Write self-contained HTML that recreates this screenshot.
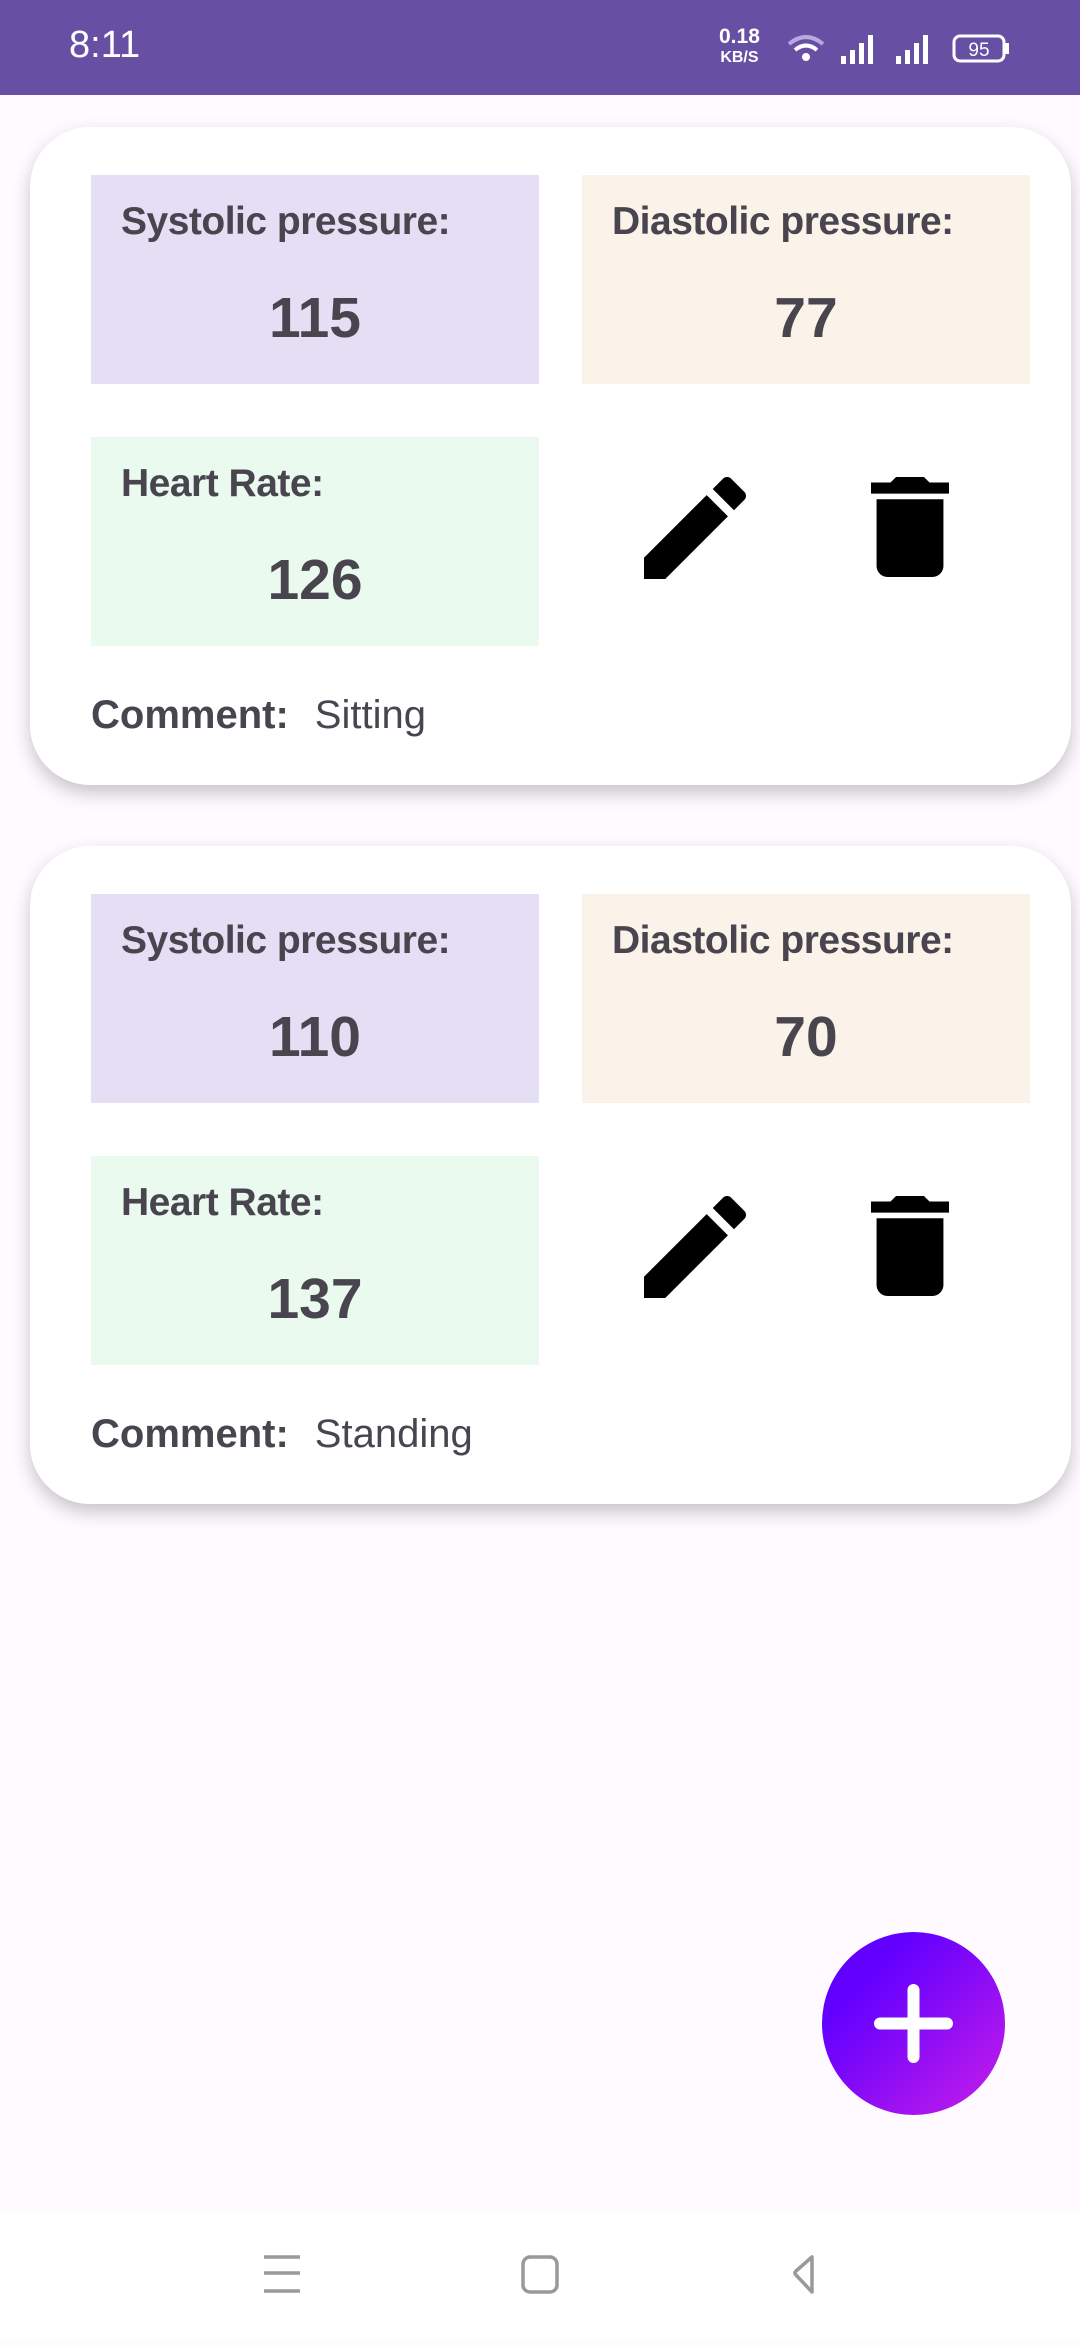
<!DOCTYPE html>
<html><head><meta charset="utf-8"><style>
*{margin:0;padding:0;box-sizing:border-box}
body{width:1080px;height:2340px;background:#fefaff;font-family:"Liberation Sans",sans-serif;position:relative;overflow:hidden;color:#49454f}
.sb{position:absolute;left:0;top:0;width:1080px;height:95px;background:#6750a4;color:#fff}
.card{position:absolute;left:30px;width:1041px;height:658px;background:#fff;border-radius:60px;box-shadow:0 8px 18px rgba(0,0,0,0.22)}
.box{position:absolute;width:448px;height:209px}
.lab{position:absolute;left:30px;top:25px;font-size:39px;font-weight:bold;letter-spacing:-0.5px}
.val{position:absolute;left:0;width:100%;text-align:center;top:110px;font-size:57px;font-weight:bold}
.com{position:absolute;left:61px;top:566px;font-size:40px}
.com b{margin-right:26px}
.nav{position:absolute;left:0;top:2212px;width:1080px;height:128px;background:#fff}
</style></head><body>
<div class="sb">
<div style="position:absolute;left:69px;top:24px;font-size:38px">8:11</div>
<div style="position:absolute;left:719px;top:27px;font-size:21px;font-weight:bold;line-height:19px;text-align:center">0.18<br><span style="font-size:16px">KB/S</span></div>
<svg style="position:absolute;left:786px;top:30px" width="230" height="40" viewBox="0 0 230 40">
<path d="M3 14 Q20 0 37 14" stroke="#b9a9e0" stroke-width="4" fill="none"/>
<path d="M9 20 Q20 11 31 20" stroke="#fff" stroke-width="4" fill="none"/>
<circle cx="20" cy="27" r="4" fill="#fff"/>
<rect x="55" y="26" width="5" height="8" fill="#fff"/><rect x="64" y="20" width="5" height="14" fill="#fff"/><rect x="73" y="13" width="5" height="21" fill="#fff"/><rect x="82" y="5" width="5" height="29" fill="#fff"/>
<rect x="110" y="26" width="5" height="8" fill="#fff"/><rect x="119" y="20" width="5" height="14" fill="#fff"/><rect x="128" y="13" width="5" height="21" fill="#fff"/><rect x="137" y="5" width="5" height="29" fill="#fff"/>
<rect x="168" y="6" width="50" height="25" rx="6" stroke="#fff" stroke-width="3" fill="none"/><rect x="219" y="13" width="4" height="11" fill="#fff"/>
<text x="193" y="26" font-size="19" fill="#fff" text-anchor="middle" font-family="Liberation Sans">95</text>
</svg>
</div>

<div class="card" style="top:127px">
<div class="box" style="left:61px;top:48px;background:#e4dff5"><div class="lab">Systolic pressure:</div><div class="val">115</div></div>
<div class="box" style="left:552px;top:48px;background:#fbf2ea"><div class="lab">Diastolic pressure:</div><div class="val">77</div></div>
<div class="box" style="left:61px;top:310px;background:#eafaee"><div class="lab">Heart Rate:</div><div class="val">126</div></div>
<svg style="position:absolute;left:597px;top:333px" width="136" height="136" viewBox="0 0 24 24"><path d="M3 17.25V21h3.75L17.81 9.94l-3.75-3.75L3 17.25zM20.71 7.04a1 1 0 0 0 0-1.41l-2.34-2.34a1 1 0 0 0-1.41 0l-1.83 1.83 3.75 3.75 1.83-1.83z"/></svg>
<svg style="position:absolute;left:841px;top:350px" width="78" height="100" viewBox="5 3 14 18" preserveAspectRatio="none"><path d="M6 19c0 1.1.9 2 2 2h8c1.1 0 2-.9 2-2V7H6v12zM19 4h-3.5l-1-1h-5l-1 1H5v2h14V4z"/></svg>
<div class="com"><b>Comment:</b>Sitting</div>
</div>

<div class="card" style="top:846px">
<div class="box" style="left:61px;top:48px;background:#e4dff5"><div class="lab">Systolic pressure:</div><div class="val">110</div></div>
<div class="box" style="left:552px;top:48px;background:#fbf2ea"><div class="lab">Diastolic pressure:</div><div class="val">70</div></div>
<div class="box" style="left:61px;top:310px;background:#eafaee"><div class="lab">Heart Rate:</div><div class="val">137</div></div>
<svg style="position:absolute;left:597px;top:333px" width="136" height="136" viewBox="0 0 24 24"><path d="M3 17.25V21h3.75L17.81 9.94l-3.75-3.75L3 17.25zM20.71 7.04a1 1 0 0 0 0-1.41l-2.34-2.34a1 1 0 0 0-1.41 0l-1.83 1.83 3.75 3.75 1.83-1.83z"/></svg>
<svg style="position:absolute;left:841px;top:350px" width="78" height="100" viewBox="5 3 14 18" preserveAspectRatio="none"><path d="M6 19c0 1.1.9 2 2 2h8c1.1 0 2-.9 2-2V7H6v12zM19 4h-3.5l-1-1h-5l-1 1H5v2h14V4z"/></svg>
<div class="com"><b>Comment:</b>Standing</div>
</div>

<div style="position:absolute;left:822px;top:1932px;width:183px;height:183px;border-radius:50%;background:linear-gradient(135deg,#6200ff 25%,#c71ee8 100%)"></div>
<svg style="position:absolute;left:822px;top:1932px" width="183" height="183"><path d="M91.5 58v67M58 91.5h67" stroke="#fff" stroke-width="12" stroke-linecap="round"/></svg>

<div class="nav">
<svg width="1080" height="128">
<g fill="none" stroke="#999" stroke-width="3.5">
<path d="M264 45h36M264 61h36M264 79h36"/>
<rect x="523" y="45" width="34" height="35" rx="7"/>
<path d="M812 45v35l-16-17q-2-2 0-4z" stroke-linejoin="round"/>
</g></svg>
</div>
</body></html>
